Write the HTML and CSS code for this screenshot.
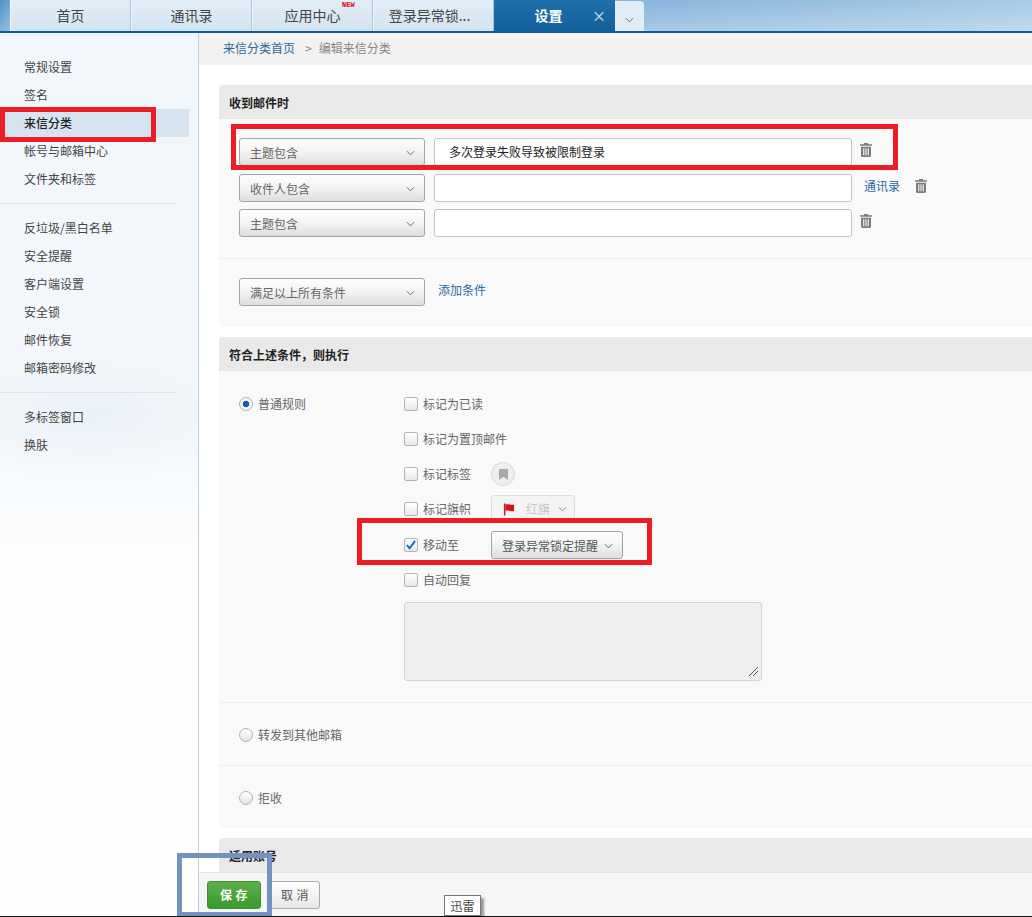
FILE: index.html
```html
<!DOCTYPE html>
<html lang="zh-CN">
<head>
<meta charset="utf-8">
<title>设置</title>
<link rel="stylesheet" href="styles.css">
</head>
<body>
<div class="page">
  <header class="tabbar">
    <div class="tab">首页</div>
    <div class="tab">通讯录</div>
    <div class="tab">应用中心<span class="new">NEW</span></div>
    <div class="tab tab-long">登录异常锁...</div>
    <div class="tab tab-active">设置<span class="close">×</span></div>
    <div class="tab-more"><svg class="chev" viewBox="0 0 10 6"><path d="M1 1l4 4 4-4"/></svg></div>
  </header>
  <div class="main">
    <aside class="sidebar">
      <ul class="menu">
        <li>常规设置</li><li>签名</li><li class="on">来信分类</li><li>帐号与邮箱中心</li><li>文件夹和标签</li>
      </ul>
      <ul class="menu">
        <li>反垃圾/黑白名单</li><li>安全提醒</li><li>客户端设置</li><li>安全锁</li><li>邮件恢复</li><li>邮箱密码修改</li>
      </ul>
      <ul class="menu menu-last">
        <li>多标签窗口</li><li>换肤</li>
      </ul>
    </aside>
    <div class="content">
      <div class="crumb"><a>来信分类首页</a><span class="sep">&gt;</span><span>编辑来信分类</span></div>
      <div class="scroll">
        <section class="panel">
          <h2>收到邮件时</h2>
          <div class="panel-body">
            <div class="conds">
              <div class="cond">
                <div class="select w186"><span>主题包含</span><svg class="chev" viewBox="0 0 10 6"><path d="M1 1l4 4 4-4"/></svg></div>
                <div class="input">多次登录失败导致被限制登录</div>
                <svg class="trash" viewBox="0 0 12 14"><use href="#trash"/></svg>
              </div>
              <div class="cond cond-mid">
                <div class="select w186"><span>收件人包含</span><svg class="chev" viewBox="0 0 10 6"><path d="M1 1l4 4 4-4"/></svg></div>
                <div class="input"></div>
                <a class="link addr">通讯录</a>
                <svg class="trash trash2" viewBox="0 0 12 14"><use href="#trash"/></svg>
              </div>
              <div class="cond">
                <div class="select w186"><span>主题包含</span><svg class="chev" viewBox="0 0 10 6"><path d="M1 1l4 4 4-4"/></svg></div>
                <div class="input"></div>
                <svg class="trash" viewBox="0 0 12 14"><use href="#trash"/></svg>
              </div>
            </div>
            <div class="match">
              <div class="select w186"><span>满足以上所有条件</span><svg class="chev" viewBox="0 0 10 6"><path d="M1 1l4 4 4-4"/></svg></div>
              <a class="link add">添加条件</a>
            </div>
          </div>
        </section>
        <section class="panel">
          <h2>符合上述条件，则执行</h2>
          <div class="panel-body">
            <div class="rule">
              <label class="radio-line"><i class="radio radio-on"></i>普通规则</label>
              <div class="actions">
                <div class="act act1"><i class="check"></i><span class="act-label">标记为已读</span></div>
                <div class="act act2"><i class="check"></i><span class="act-label">标记为置顶邮件</span></div>
                <div class="act act3"><i class="check"></i><span class="act-label act-w">标记标签</span>
                  <span class="tagbtn"><svg viewBox="0 0 10 12"><path d="M0 0h10v12L5 8.500 0 12z"/></svg></span></div>
                <div class="act act4"><i class="check"></i><span class="act-label act-w">标记旗帜</span>
                  <div class="flagbtn"><svg class="flag" viewBox="0 0 13 13"><path d="M1 0h1.600v13H1z"/><path d="M2.600 1c3-1 5.400 1 9.400 0v7c-4 1-6.400-1-9.400 0z"/></svg><span>红旗</span><svg class="chev" viewBox="0 0 10 6"><path d="M1 1l4 4 4-4"/></svg></div></div>
                <div class="act act5"><i class="check check-on"><svg viewBox="0 0 13 13"><path d="M2 6.500l3 3.500 6-8"/></svg></i><span class="act-label act-w">移动至</span>
                  <div class="select movebtn"><span>登录异常锁定提醒</span><svg class="chev" viewBox="0 0 10 6"><path d="M1 1l4 4 4-4"/></svg></div></div>
                <div class="act act6"><i class="check"></i><span class="act-label">自动回复</span></div>
                <div class="reply"><svg viewBox="0 0 9 9"><path d="M0 9L9 0M4 9l5-5"/></svg></div>
              </div>
            </div>
            <div class="radio-row"><label class="radio-line"><i class="radio"></i>转发到其他邮箱</label></div>
            <div class="radio-row"><label class="radio-line"><i class="radio"></i>拒收</label></div>
          </div>
        </section>
        <section class="panel panel-last">
          <h2>适用账号</h2>
        </section>
      </div>
      <footer class="foot">
        <button class="btn btn-save">保 存</button>
        <button class="btn btn-cancel">取 消</button>
      </footer>
    </div>
  </div>
  <div class="mark mark-menu"></div>
  <div class="mark mark-cond"></div>
  <div class="mark mark-move"></div>
  <div class="mark mark-save"></div>
  <div class="tooltip">迅雷</div>
</div>
<svg class="defs" width="0" height="0"><defs>
  <g id="trash"><path d="M4.200 0h3.600l.6 1.300H12v1.500H0V1.300h3.600z"/><path fill-rule="evenodd" d="M1 3.800h10V12.500Q11 14 9.500 14h-7Q1 14 1 12.500zM3.200 5.300v7h1.100v-7zM5.450 5.300v7h1.100v-7zM7.700 5.300v7h1.100v-7z"/></g>
</defs></svg>
</body>
</html>
```
FILE: styles.css
```css
* { box-sizing: border-box; }
html, body { margin: 0; padding: 0; height: 100%; overflow: hidden; background: #fff; }
body { font: 12px/1.4 "Noto Sans CJK SC", "Liberation Sans", sans-serif; color: #555; }
ul { list-style: none; margin: 0; padding: 0; }
h2 { margin: 0; }
a { color: #2a6a9e; }
.defs { position: absolute; }

.page { position: relative; width: 1032px; height: 917px; display: flex; flex-direction: column; border-bottom: 1px solid #111; overflow: hidden; }

/* tabs */
.tabbar { flex: none; height: 33px; display: flex; padding-left: 10px; border-bottom: 2px solid #0f5c96;
  background: linear-gradient(rgba(255,255,255,0), rgba(255,255,255,.28)), linear-gradient(90deg, #4f93c9 0, #6aa5d4 10px, #86b5dc 640px, #a8cbe6 1032px); }
.tab { position: relative; width: 121px; height: 31px; line-height: 30px; text-align: center; font-size: 14px; color: #444;
  background: linear-gradient(#e3eef7, #d2e3f1); border-left: 1px solid #f2f7fb; border-right: 1px solid #a9c4da; }
.tab-long { padding-right: 8px; }
.tab-active { color: #fff; font-weight: 700; padding-right: 12px; background: linear-gradient(#2270aa, #115f9b); border: 0; }
.new { position: absolute; left: 89px; top: 1px; font: 700 7px/8px "Liberation Mono", monospace; color: #e60012; }
.close { position: absolute; right: 9px; top: 0; font-size: 14px; font-weight: 400; color: #dbe8f2; }
.tab-more { width: 29px; height: 30px; margin-top: 1px; background: #e0ecf6; border-radius: 0 4px 0 0; display: flex; align-items: flex-end; justify-content: center; padding-bottom: 8px; }
.chev { width: 9px; height: 6px; fill: none; stroke: #666; stroke-width: 1.100; flex: none; }

.main { flex: 1; min-height: 0; display: flex; }

/* sidebar */
.sidebar { flex: none; width: 199px; padding-top: 20px; border-right: 1px solid #bdd0dd;
  background: radial-gradient(ellipse 170px 70px at 90px 380px, #ebf2f7 0, rgba(235,242,247,0) 100%), linear-gradient(#f1f6fb 0, #f4f8fc 45%, #fdfeff 60%, #fff 100%); }
.menu { width: 177px; padding-bottom: 10px; margin-bottom: 10px; border-bottom: 1px solid #dfe4e8; }
.menu-last { border-bottom: 0; }
.menu li { height: 28px; line-height: 28px; padding-left: 24px; color: #444; font-size: 12px; white-space: nowrap; }
.menu li.on { width: 189px; background: #d6e4f0; color: #222; font-weight: 500; }

/* content */
.content { flex: 1; min-width: 0; display: flex; flex-direction: column; }
.crumb { flex: none; height: 32px; line-height: 30px; padding-left: 24px; background: #f2f2f2; color: #888; }
.crumb .sep { margin: 0 7px 0 10px; }
.scroll { flex: 1; min-height: 0; overflow: hidden; padding: 20px 0 0 20px; }
.panel { margin-bottom: 10px; }
.panel-last { margin-bottom: 0; }
.panel h2 { height: 34px; line-height: 35px; padding-left: 10px; font-size: 12px; font-weight: 700; color: #222; background: #e9e9e9; border-radius: 4px 0 0 0; }
.panel-body { background: #f9f9f9; border-radius: 0 0 0 4px; }

.conds { padding: 19px 0 13px 20px; border-bottom: 1px solid #ececec; }
.cond { display: flex; align-items: flex-start; height: 36px; }
.cond-mid { height: 35px; }
.select { height: 28px; display: flex; align-items: center; justify-content: space-between; padding: 0 9px 0 10px; color: #666; border: 1px solid #a3a3a3; border-radius: 3px; background: linear-gradient(#fff 0, #f3f3f3 50%, #dedede 100%); }
.select span { line-height: 28px; padding-top: 1px; }
.select .chev { margin-top: 2px; }
.w186 { width: 186px; flex: none; }
.input { width: 418px; height: 28px; margin-left: 9px; line-height: 26px; padding-left: 14px; color: #222; background: #fff; border: 1px solid #c4c4c4; border-radius: 3px; }
.trash { width: 12px; height: 14px; margin: 5px 0 0 8px; fill: #7c7c7c; flex: none; }
.trash2 { margin-left: 15px; }
.link { color: #2a6a9e; }
.addr { margin: 3px 0 0 12px; line-height: 17px; }
.match { display: flex; align-items: flex-start; padding: 19px 0 21px 20px; }
.add { margin: 3px 0 0 13px; line-height: 17px; }

.rule { display: flex; padding: 24px 0 0 20px; border-bottom: 1px solid #ececec; height: 332px; }
.radio-line { display: flex; align-items: center; height: 18px; color: #666; }
.radio { width: 14px; height: 14px; margin-right: 5px; border-radius: 50%; border: 1px solid #b3b3b3; background: linear-gradient(#fff, #e4e4e4); flex: none; display: block; }
.radio-on { background: radial-gradient(circle at center, #1560a6 0, #1560a6 3px, #f6f6f6 3.600px); }
.actions { margin-left: 98px; width: 400px; }
.act { display: flex; align-items: center; height: 18px; color: #666; }
.act1, .act2 { margin-bottom: 17px; }
.act3 { height: 24px; margin-top: -3px; margin-bottom: 9px; }
.act4 { height: 28px; margin-bottom: 8px; }
.act5 { height: 28px; margin-bottom: 12px; }
.check { position: relative; display: block; width: 14px; height: 14px; margin-right: 5px; border: 1px solid #b3b3b3; border-radius: 2px; background: linear-gradient(#fff, #e8e8e8); flex: none; }
.check svg { display: block; width: 12px; height: 12px; fill: none; stroke: #1a66b3; stroke-width: 2; }
.act-label { white-space: nowrap; }
.act-w { width: 68px; }
.tagbtn { width: 24px; height: 24px; border-radius: 50%; border: 1px solid #d8d8d8; background: #efefef; display: flex; align-items: center; justify-content: center; }
.tagbtn svg { width: 9px; height: 11px; fill: #a9a9a9; }
.flagbtn { width: 84px; height: 28px; display: flex; align-items: center; padding-left: 11px; border: 1px solid #dedede; border-radius: 3px; background: #f4f4f4; color: #c4c4c4; }
.flag { width: 12px; height: 13px; fill: #d7141c; flex: none; margin-right: 11px; }
.flagbtn span { width: 32px; flex: none; }
.flagbtn .chev { stroke: #888; }
.movebtn { width: 132px; color: #555; white-space: nowrap; }
.reply { position: relative; width: 358px; height: 79px; margin-top: 13px; background: #efefef; border: 1px solid #d3d3d3; border-radius: 3px; }
.reply svg { position: absolute; right: 3px; bottom: 4px; width: 9px; height: 9px; fill: none; stroke: #555; stroke-width: 1; }
.radio-row { height: 63px; padding: 23px 0 0 20px; border-bottom: 1px solid #ececec; }
.radio-row:last-child { border-bottom: 0; height: 62px; }

/* footer */
.foot { flex: none; height: 44px; display: flex; gap: 9px; padding: 8px 0 0 8px; background: #f6f6f6; border-top: 1px solid #e2e2e2; }
.btn { height: 28px; width: 54px; padding: 0; font: 12px/26px "Noto Sans CJK SC", sans-serif; border-radius: 3px; cursor: pointer; letter-spacing: .5px; }
.btn-save { color: #fff; font-weight: 700; background: linear-gradient(#5cb04a, #3b9a2b); border: 1px solid #3f9130; }
.btn-cancel { width: 50px; color: #555; background: linear-gradient(#fff, #e6e6e6); border: 1px solid #aaa; }

/* annotations */
.mark { position: absolute; border: 5px solid #ee1c25; }
.mark-menu { left: 0; top: 107px; width: 156px; height: 35px; }
.mark-cond { left: 231px; top: 124px; width: 667px; height: 46px; }
.mark-move { left: 357px; top: 518px; width: 295px; height: 47px; }
.mark-save { left: 177px; top: 853px; width: 95px; height: 64px; border-color: #7093bf; }
.tooltip { position: absolute; left: 444px; top: 895px; width: 37px; height: 21px; line-height: 19px; text-align: center; color: #444; background: #fff; border: 1px solid #777; box-shadow: 3px 3px 2px #999; }
```
